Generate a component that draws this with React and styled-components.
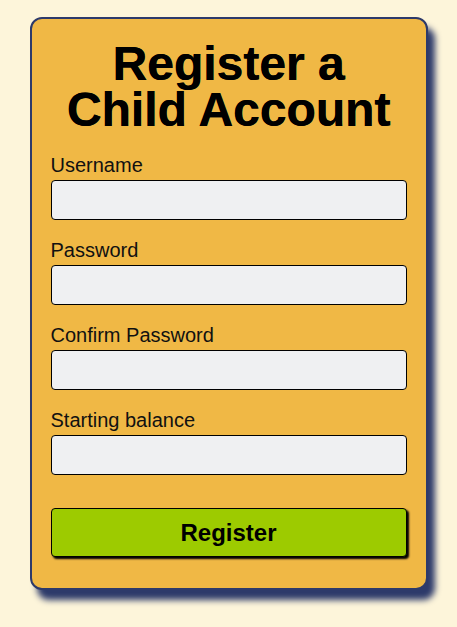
import React from "react";
import styled, { createGlobalStyle } from "styled-components";

const Global = createGlobalStyle`
  html, body { margin: 0; padding: 0; background: #fdf5da; }
  body { font-family: "Liberation Sans", Arial, sans-serif; }
  * { box-sizing: border-box; }
`;

const Page = styled.div`
  min-height: 100vh;
  padding-top: 17px;
  display: flex;
  justify-content: center;
  align-items: flex-start;
`;

const Card = styled.form`
  width: 398px;
  background: #f0b845;
  border: 2px solid #2d3a6a;
  border-radius: 12px;
  box-shadow: 7px 10px 6px #2d3a6a;
  padding: 0 19px 31px;
  display: flex;
  flex-direction: column;
`;

const Title = styled.h1`
  margin: 22px 0 21px;
  font-size: 48px;
  line-height: 46px;
  font-weight: 700;
  text-align: center;
  color: #000;
  text-shadow: 0.4px 0.4px 0 #000;
`;

const Field = styled.div`
  display: flex;
  flex-direction: column;
  gap: 3px;
  margin-bottom: 19px;
`;

const Label = styled.label`
  font-size: 20px;
  line-height: 23px;
  color: #111;
`;

const Input = styled.input`
  height: 40px;
  width: 100%;
  background: #eff0f2;
  border: 1px solid #000;
  border-radius: 4px;
  font: inherit;
  font-size: 18px;
  padding: 0 8px;
`;

const Button = styled.button`
  margin-top: 14px;
  height: 49px;
  width: 100%;
  background: #9dcb00;
  border: 1px solid #000;
  border-radius: 4px;
  box-shadow: 2px 2px 2px #000;
  font-family: "Liberation Sans", Arial, sans-serif;
  font-size: 24px;
  font-weight: 700;
  color: #000;
  cursor: pointer;
`;

const fields = ["Username", "Password", "Confirm Password", "Starting balance"];

export default function App() {
  return (
    <>
      <Global />
      <Page>
        <Card onSubmit={(e) => e.preventDefault()}>
          <Title>
            Register a
            <br />
            Child Account
          </Title>
          {fields.map((f) => (
            <Field key={f}>
              <Label>{f}</Label>
              <Input type={f.includes("Password") ? "password" : "text"} />
            </Field>
          ))}
          <Button type="submit">Register</Button>
        </Card>
      </Page>
    </>
  );
}
